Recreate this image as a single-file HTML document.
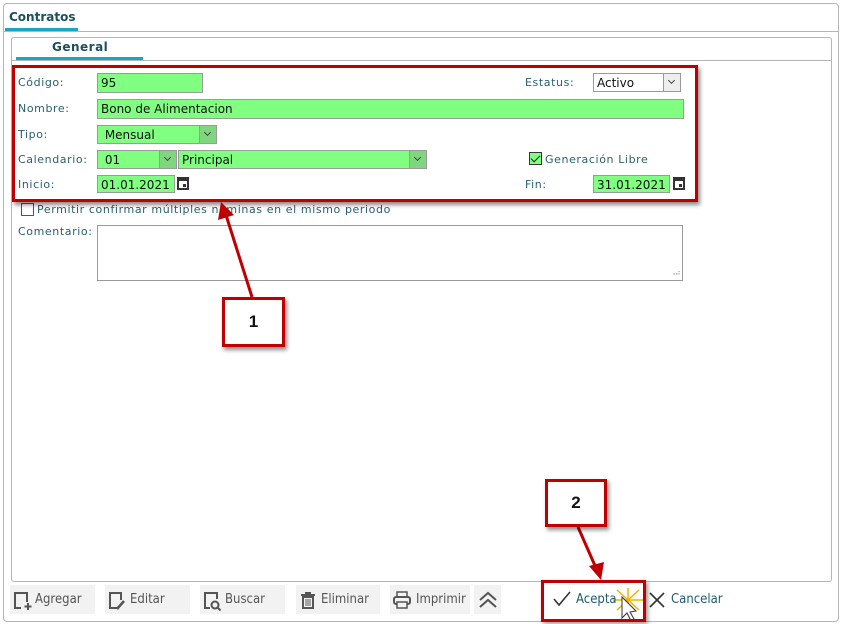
<!DOCTYPE html>
<html><head><meta charset="utf-8">
<style>
*{box-sizing:border-box;margin:0;padding:0}
body{width:841px;height:624px;background:#fff;position:relative;overflow:hidden;font-family:"DejaVu Sans","Liberation Sans",sans-serif;font-size:11px;color:#1f5c6b}
.a{position:absolute}
.lbl{position:absolute;font-size:11px;color:#2a5f6d;white-space:nowrap;letter-spacing:0.6px}
.in{position:absolute;background:#80ff80;border:1px solid #9a9a9a;font-size:12px;color:#111;padding-left:3px;line-height:18px;white-space:nowrap;font-family:"DejaVu Sans",sans-serif}
.dd{position:absolute;top:0;right:0;width:17px;height:100%;border-left:1px solid #9a9a9a;background:#7fd67f}
.dd:after{content:"";position:absolute;left:5px;top:4px;width:4px;height:4px;border-right:1px solid #444;border-bottom:1px solid #444;transform:rotate(45deg)}
.cal{position:absolute;width:12px;height:13px;border:2px solid #333;border-top-width:4px}
.cal:after{content:"";position:absolute;right:1px;bottom:1px;width:3px;height:3px;background:#333}
.btn{position:absolute;top:585px;height:29px;background:#f2f2f2;font-size:13px;color:#555;line-height:29px;font-family:"DejaVu Sans Condensed","DejaVu Sans",sans-serif}
.red{position:absolute;border:3px solid #c00000;box-shadow:2px 3px 4px rgba(0,0,0,.45)}
</style></head><body>
<div class="a" style="left:3px;top:3px;width:836px;height:619px;border:1px solid #b5b5b5;border-radius:4px"></div>
<div class="a" style="left:4px;top:31px;width:834px;height:1px;background:#b5b5b5"></div>
<div class="a" style="left:9px;top:10px;font-weight:bold;font-size:12px;color:#1c4f5c">Contratos</div>
<div class="a" style="left:5px;top:28px;width:73px;height:3px;background:#17a6c6"></div>

<div class="a" style="left:11px;top:37px;width:821px;height:545px;border:1px solid #b5b5b5;border-radius:3px"></div>
<div class="a" style="left:12px;top:60px;width:819px;height:1px;background:#b5b5b5"></div>
<div class="a" style="left:52px;top:40px;font-weight:bold;font-size:12px;color:#1c4f5c;letter-spacing:.5px">General</div>
<div class="a" style="left:16px;top:57px;width:127px;height:3px;background:#17a6c6"></div>

<div class="lbl" style="left:18px;top:76px">Código:</div>
<div class="in" style="left:97px;top:73px;width:106px;height:20px">95</div>
<div class="lbl" style="left:525px;top:76px">Estatus:</div>
<div class="in" style="left:593px;top:73px;width:88px;height:19px;background:#fff">Activo<span class="dd" style="background:#eee"></span></div>

<div class="lbl" style="left:18px;top:102px">Nombre:</div>
<div class="in" style="left:97px;top:99px;width:587px;height:20px">Bono de Alimentacion</div>

<div class="lbl" style="left:18px;top:128px">Tipo:</div>
<div class="in" style="left:97px;top:125px;width:120px;height:19px">&nbsp;Mensual<span class="dd"></span></div>

<div class="lbl" style="left:18px;top:153px">Calendario:</div>
<div class="in" style="left:97px;top:150px;width:80px;height:19px">&nbsp;01<span class="dd"></span></div>
<div class="in" style="left:178px;top:150px;width:249px;height:19px">Principal<span class="dd"></span></div>
<div class="a" style="left:529px;top:152px;width:13px;height:13px;border:1px solid #333;background:#80ff80"></div>
<div class="a" style="left:533px;top:153px;width:5px;height:9px;border-right:1.5px solid #222;border-bottom:1.5px solid #222;transform:rotate(45deg)"></div>
<div class="lbl" style="left:545px;top:153px">Generación Libre</div>

<div class="lbl" style="left:18px;top:178px">Inicio:</div>
<div class="in" style="left:97px;top:175px;width:78px;height:18px">01.01.2021</div>
<div class="cal" style="left:177px;top:177px"></div>
<div class="lbl" style="left:525px;top:178px">Fin:</div>
<div class="in" style="left:593px;top:175px;width:77px;height:18px">31.01.2021</div>
<div class="cal" style="left:673px;top:177px"></div>

<div class="a" style="left:21px;top:203px;width:13px;height:13px;border:1px solid #555"></div>
<div class="lbl" style="left:37px;top:203px">Permitir confirmar múltiples nominas en el mismo periodo</div>

<div class="lbl" style="left:18px;top:225px">Comentario:</div>
<div class="a" style="left:97px;top:225px;width:586px;height:56px;border:1px solid #9a9a9a"></div>
<div class="a" style="left:670px;top:268px;color:#999;font-size:8px;letter-spacing:-1px">⠠⠴</div>

<div class="red" style="left:12px;top:65px;width:686px;height:137px"></div>

<svg class="a" style="left:0;top:0" width="841" height="624">
<line x1="252" y1="297" x2="226" y2="215" stroke="#c00000" stroke-width="3"/>
<polygon points="221,202 218,220 234,215" fill="#c00000"/>
<line x1="578" y1="527" x2="596" y2="568" stroke="#c00000" stroke-width="3"/>
<polygon points="601,580 589,566 604,562" fill="#c00000"/>
<g stroke="#f0b400" stroke-width="1.5">
<line x1="613" y1="600" x2="643" y2="600"/><line x1="628" y1="588" x2="628" y2="612"/>
<line x1="617" y1="590" x2="639" y2="610"/><line x1="617" y1="610" x2="639" y2="590"/>
</g>
<polygon points="622,597 622,618 627,613 631,621 634,619 630,612 636,611" fill="#fff" stroke="#333" stroke-width="1"/>
</svg>

<div class="red" style="left:222px;top:297px;width:63px;height:50px;background:#fff;text-align:center;line-height:44px;font-weight:bold;font-size:17px;color:#111;font-family:'Liberation Sans',sans-serif">1</div>
<div class="red" style="left:545px;top:479px;width:62px;height:48px;background:#fff;text-align:center;line-height:42px;font-weight:bold;font-size:17px;color:#111;font-family:'Liberation Sans',sans-serif">2</div>

<div class="btn" style="left:10px;width:85px"><svg class="a" style="left:3px;top:6px" width="20" height="20"><path d="M8 17H2V2h12v9" fill="none" stroke="#555" stroke-width="2"/><path d="M15 12v7M11.5 15.5h7" stroke="#555" stroke-width="2"/></svg><span style="position:absolute;left:25px">Agregar</span></div>
<div class="btn" style="left:105px;width:85px"><svg class="a" style="left:3px;top:6px" width="20" height="20"><path d="M9 17H2V2h11v7" fill="none" stroke="#555" stroke-width="2"/><path d="M9 18l7-8" stroke="#555" stroke-width="2.5"/></svg><span style="position:absolute;left:25px">Editar</span></div>
<div class="btn" style="left:200px;width:85px"><svg class="a" style="left:3px;top:6px" width="20" height="20"><path d="M7 17H2V2h12v6" fill="none" stroke="#555" stroke-width="2"/><circle cx="12" cy="14" r="3.5" fill="none" stroke="#555" stroke-width="2"/><path d="M14.5 16.5l3 3" stroke="#555" stroke-width="2"/></svg><span style="position:absolute;left:25px">Buscar</span></div>
<div class="btn" style="left:296px;width:84px"><svg class="a" style="left:2px;top:5px" width="20" height="20"><path d="M3 5h14M8 5V3h4v2" fill="none" stroke="#555" stroke-width="2"/><rect x="5" y="7" width="10" height="11" fill="none" stroke="#555" stroke-width="2"/><path d="M8 9v7M10 9v7M12 9v7" stroke="#555"/></svg><span style="position:absolute;left:25px">Eliminar</span></div>
<div class="btn" style="left:390px;width:80px"><svg class="a" style="left:2px;top:5px" width="20" height="20"><rect x="5" y="2" width="10" height="5" fill="none" stroke="#555" stroke-width="1.5"/><rect x="2" y="7" width="16" height="7" rx="2" fill="none" stroke="#555" stroke-width="2"/><rect x="5" y="12" width="10" height="6" fill="#f2f2f2" stroke="#555" stroke-width="1.5"/></svg><span style="position:absolute;left:26px">Imprimir</span></div>
<div class="btn" style="left:474px;width:27px"><svg class="a" style="left:4px;top:6px" width="20" height="18"><path d="M2 9l8-7 8 7M2 16l8-7 8 7" fill="none" stroke="#555" stroke-width="2"/></svg></div>

<div class="a" style="left:553px;top:591px"><svg width="18" height="16"><path d="M1 8l5 6L17 1" fill="none" stroke="#333" stroke-width="1.6"/></svg></div>
<div class="a" style="left:576px;top:592px;font-size:13px;color:#1f5c6b;font-family:'DejaVu Sans Condensed','DejaVu Sans',sans-serif">Acepta</div>
<div class="a" style="left:649px;top:592px"><svg width="16" height="16"><path d="M1 1l14 14M15 1L1 15" stroke="#333" stroke-width="1.6"/></svg></div>
<div class="a" style="left:671px;top:592px;font-size:13px;color:#1f5c6b;font-family:'DejaVu Sans Condensed','DejaVu Sans',sans-serif">Cancelar</div>
<div class="red" style="left:541px;top:580px;width:105px;height:42px;box-shadow:2px 2px 4px rgba(0,0,0,.4)"></div>
</body></html>
